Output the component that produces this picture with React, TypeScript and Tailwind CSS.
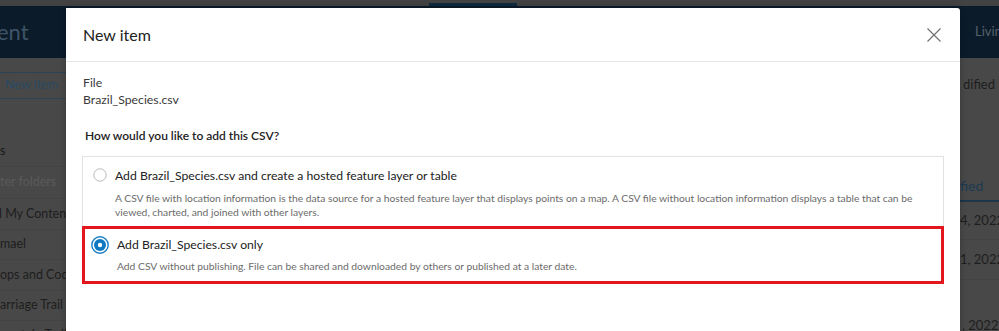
import React from "react";

function RadioOff() {
  return (
    <svg width="14" height="14" viewBox="0 0 14 14" className="shrink-0">
      <circle cx="7" cy="7" r="6.2" fill="#fff" stroke="#b9b9b9" strokeWidth="1" />
    </svg>
  );
}

function RadioOn() {
  return (
    <svg width="18" height="18" viewBox="0 0 18 18" className="shrink-0">
      <circle cx="9" cy="9" r="8.2" fill="#fff" stroke="#1a7fc4" strokeWidth="1.4" />
      <circle cx="9" cy="9" r="6" fill="#0f79c2" />
      <circle cx="9" cy="9" r="2.2" fill="#fff" />
    </svg>
  );
}

export default function App() {
  return (
    <div className="relative w-[999px] h-[331px] overflow-hidden bg-[#484848] font-['Lato','Noto_Sans',sans-serif]">
      {/* background page (dimmed by the modal overlay) */}
      <div className="flex flex-col h-full">
        <div className="h-[6px] shrink-0 bg-[#424242] flex">
          <div className="ml-[429px] mt-[3px] w-[88px] h-[3px] bg-[#0e2a41]" />
        </div>
        <div className="h-[52px] shrink-0 bg-[#0b1b29] flex items-center justify-between">
          <div className="text-[22px] text-[#3f5467] -ml-[3px] leading-none whitespace-nowrap">ent</div>
          <div className="text-[13px] text-[#55616b] w-[24px] overflow-hidden whitespace-nowrap">Living</div>
        </div>
        <div className="flex flex-1 min-h-0 overflow-hidden">
          <div className="w-[66px] shrink-0 flex flex-col overflow-hidden whitespace-nowrap text-[12.5px] text-[#1e1e1e]">
            <div className="mt-[14px] h-[27px] shrink-0 border-y border-[#2b4356] flex items-center pl-[5px] text-[12.5px] text-[#2a4a62]">
              New item
            </div>
            <div className="mt-[37px] h-[31px] shrink-0 flex items-center border-b border-[#434343] text-[#1a1a1a]">s</div>
            <div className="h-[31px] shrink-0 flex items-center text-[#5a5a5a]">ter folders</div>
            <div className="h-[31px] shrink-0 flex items-center border-t border-[#444444] text-[#1e1e1e] -ml-[1px]">l My Content</div>
            <div className="h-[30px] shrink-0 flex items-center border-t border-[#444444] text-[#1e1e1e]">mael</div>
            <div className="h-[31px] shrink-0 flex items-center border-t border-[#444444] text-[#1e1e1e]">ops and Code</div>
            <div className="h-[30px] shrink-0 flex items-center border-t border-[#444444] text-[#1e1e1e]">arriage Trail</div>
            <div className="h-[30px] shrink-0 flex items-center border-t border-[#444444] text-[#1e1e1e]">ountain Trail</div>
          </div>
          <div className="flex-1" />
          <div className="w-[39px] shrink-0 flex flex-col overflow-hidden whitespace-nowrap text-[13px] text-[#1e1e1e]">
            <div className="mt-[17px] h-[20px] shrink-0 flex items-center pl-[3px]">dified</div>
            <div className="mt-[80px] h-[20px] shrink-0 flex items-center text-[#1b3a52] text-[14px]">fied</div>
            <div className="mt-[5px] h-[2px] shrink-0 bg-[#1c3549]" />
            <div className="h-[38px] shrink-0 flex items-center border-b border-[#444444]">4, 2022</div>
            <div className="h-[40px] shrink-0 flex items-center border-b border-[#444444]">1, 2022</div>
            <div className="h-[58px] shrink-0 flex items-end pb-[3px] pl-[2px]">, 2022</div>
          </div>
        </div>
      </div>

      {/* modal */}
      <div className="absolute left-[66px] top-[8px] w-[894px] h-[340px] bg-white rounded-tr-[3px] shadow-[0_0_6px_rgba(0,0,0,0.25)]">
        <div className="h-[54px] flex items-center justify-between pl-[17px] pr-[18px] border-b border-[#e6e6e6]">
          <div className="text-[16px] text-[#222222]">New item</div>
          <svg width="16" height="16" viewBox="0 0 16 16">
            <path d="M1.5 1.5 L14.5 14.5 M14.5 1.5 L1.5 14.5" stroke="#6e6e6e" strokeWidth="1.1" fill="none" />
          </svg>
        </div>
        <div className="px-[16px] pt-[12px]">
          <div className="pl-[1px] text-[12.25px] leading-[17px] text-[#3a3a3a]">
            <div>File</div>
            <div>Brazil_Species.csv</div>
          </div>
          <div className="mt-[19px] pl-[3px] text-[12px] leading-[17px] font-semibold text-[#222222]">
            How would you like to add this CSV?
          </div>
          <div className="mt-[12px]">
            <div className="h-[70px] border border-b-0 border-[#e2e2e2] flex items-start pl-[10px] pt-[10px]">
              <div className="mt-[1px]">
                <RadioOff />
              </div>
              <div className="ml-[8px]">
                <div className="text-[12.2px] leading-[18px] text-[#222222]">
                  Add Brazil_Species.csv and create a hosted feature layer or table
                </div>
                <div className="mt-[6px] text-[10.3px] leading-[14px] text-[#6b6b6b] pr-[20px]">
                  A CSV file with location information is the data source for a hosted feature layer that displays points on a map. A CSV file without location information displays a table that can be viewed, charted, and joined with other layers.
                </div>
              </div>
            </div>
            <div className="h-[58px] border-[3px] border-[#e3161e] flex items-start pl-[6px] pt-[7px]">
              <RadioOn />
              <div className="ml-[8px]">
                <div className="text-[12.2px] leading-[18px] text-[#222222]">Add Brazil_Species.csv only</div>
                <div className="mt-[5px] text-[10.3px] leading-[14px] text-[#6b6b6b]">
                  Add CSV without publishing. File can be shared and downloaded by others or published at a later date.
                </div>
              </div>
            </div>
          </div>
        </div>
      </div>
    </div>
  );
}
